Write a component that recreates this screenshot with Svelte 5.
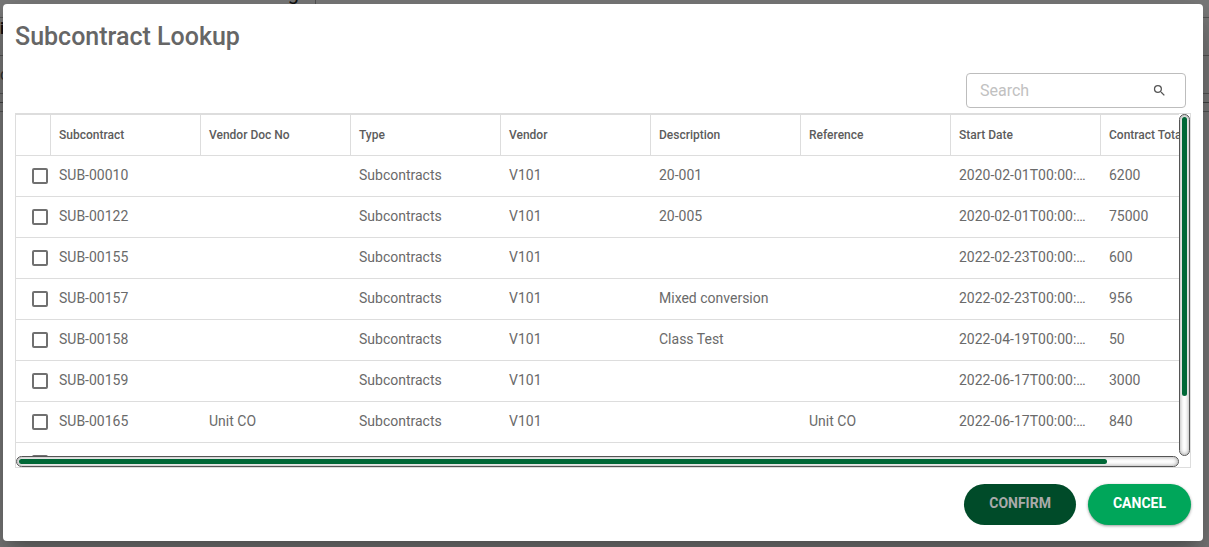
<script>
  const columns = [
    { key: 'id', label: 'Subcontract' },
    { key: 'vendorDocNo', label: 'Vendor Doc No' },
    { key: 'type', label: 'Type' },
    { key: 'vendor', label: 'Vendor' },
    { key: 'description', label: 'Description' },
    { key: 'reference', label: 'Reference' },
    { key: 'startDate', label: 'Start Date' },
    { key: 'total', label: 'Contract Total' }
  ];

  const rows = [
    { id: 'SUB-00010', type: 'Subcontracts', vendor: 'V101', description: '20-001', startDate: '2020-02-01T00:00:00', total: 6200 },
    { id: 'SUB-00122', type: 'Subcontracts', vendor: 'V101', description: '20-005', startDate: '2020-02-01T00:00:00', total: 75000 },
    { id: 'SUB-00155', type: 'Subcontracts', vendor: 'V101', startDate: '2022-02-23T00:00:00', total: 600 },
    { id: 'SUB-00157', type: 'Subcontracts', vendor: 'V101', description: 'Mixed conversion', startDate: '2022-02-23T00:00:00', total: 956 },
    { id: 'SUB-00158', type: 'Subcontracts', vendor: 'V101', description: 'Class Test', startDate: '2022-04-19T00:00:00', total: 50 },
    { id: 'SUB-00159', type: 'Subcontracts', vendor: 'V101', startDate: '2022-06-17T00:00:00', total: 3000 },
    { id: 'SUB-00165', vendorDocNo: 'Unit CO', type: 'Subcontracts', vendor: 'V101', reference: 'Unit CO', startDate: '2022-06-17T00:00:00', total: 840 },
    { id: '' }
  ];

  let search = $state('');
  let selected = $state([]);
</script>

<div class="screen">
  <div class="page" aria-hidden="true">
    <div class="page-head"><span>g</span></div>
    <div class="page-row strong">i</div>
    <div class="page-row">c</div>
    <div class="page-gap"></div>
    <div class="page-line"></div>
  </div>

  <div class="backdrop">
    <div class="dialog" role="dialog" aria-modal="true" aria-labelledby="dialog-title">
      <h2 id="dialog-title">Subcontract Lookup</h2>

      <div class="toolbar">
        <div class="search">
          <input type="text" placeholder="Search" aria-label="Search" bind:value={search} />
          <svg viewBox="0 0 24 24" aria-hidden="true">
            <path d="M15.5 14h-.79l-.28-.27A6.47 6.47 0 0 0 16 9.5 6.5 6.5 0 1 0 9.5 16c1.61 0 3.09-.59 4.23-1.57l.27.28v.79l5 4.99L20.49 19l-4.99-5zm-6 0C7.01 14 5 11.99 5 9.5S7.01 5 9.5 5 14 7.01 14 9.5 11.99 14 9.5 14z" />
          </svg>
        </div>
      </div>

      <div class="grid">
        <div class="viewport">
          <table>
            <colgroup>
              <col class="col-check" />
              {#each columns as column (column.key)}
                <col class="col-data" />
              {/each}
            </colgroup>
            <thead>
              <tr>
                <th></th>
                {#each columns as column (column.key)}
                  <th>{column.label}</th>
                {/each}
              </tr>
            </thead>
            <tbody>
              {#each rows as row (row.id)}
                <tr>
                  <td class="check">
                    <input type="checkbox" value={row.id} bind:group={selected} aria-label="Select {row.id}" />
                  </td>
                  {#each columns as column (column.key)}
                    <td>{row[column.key] ?? ''}</td>
                  {/each}
                </tr>
              {/each}
            </tbody>
          </table>
        </div>
        <div class="track vertical"><div class="thumb"></div></div>
        <div class="track horizontal"><div class="thumb"></div></div>
      </div>

      <div class="actions">
        <button class="confirm" disabled={selected.length === 0}>CONFIRM</button>
        <button class="cancel">CANCEL</button>
      </div>
    </div>
  </div>
</div>

<style>
  :global(body) {
    margin: 0;
    font-family: Roboto, 'Liberation Sans', sans-serif;
  }

  .screen {
    display: grid;
    grid-template-columns: minmax(0, 1fr);
    min-height: 100vh;
    overflow: hidden;
  }

  .page,
  .backdrop {
    grid-area: 1 / 1;
  }

  /* page under the dialog, scrolled down a little */
  .page {
    margin-top: -24px;
    background: #f4f4f4;
    color: #666;
    font-size: 16px;
  }

  .page-head {
    box-sizing: border-box;
    height: 42px;
    border-bottom: 1px solid #aaa;
  }

  .page-head span {
    display: block;
    box-sizing: border-box;
    width: 316px;
    height: 41px;
    padding-right: 16px;
    border-right: 1px solid #aaa;
    color: #222;
    font-size: 20px;
    line-height: 34px;
    text-align: right;
  }

  .page-row {
    box-sizing: border-box;
    height: 38px;
    border-bottom: 1px solid #aaa;
    line-height: 38px;
  }

  .page-row.strong {
    color: #222;
    font-weight: 700;
    line-height: 22px;
  }

  .page-gap {
    height: 8px;
    border-bottom: 1px solid #888;
  }

  .page-line {
    height: 8px;
    border-bottom: 1px solid #aaa;
  }

  .backdrop {
    position: relative;
    box-sizing: border-box;
    padding: 4px 6px 6px 3px;
    background: rgba(0, 0, 0, 0.5);
  }

  .dialog {
    box-sizing: border-box;
    padding: 17px 12px 16px;
    background: #fff;
    border-radius: 4px;
    box-shadow:
      0 11px 15px -7px rgba(0, 0, 0, 0.2),
      0 24px 38px 3px rgba(0, 0, 0, 0.14),
      0 9px 46px 8px rgba(0, 0, 0, 0.12);
    color: #666;
  }

  h2 {
    margin: 0;
    font-size: 25px;
    font-weight: 500;
    line-height: 32px;
  }

  .toolbar {
    display: flex;
    justify-content: flex-end;
    padding: 20px 5px 5px;
  }

  .search {
    display: flex;
    align-items: center;
    box-sizing: border-box;
    width: 220px;
    height: 35px;
    padding: 0 18px 0 13px;
    border: 1px solid #bdbdbd;
    border-radius: 4px;
  }

  .search input {
    flex: 1;
    min-width: 0;
    padding: 0;
    border: 0;
    outline: 0;
    background: none;
    color: #666;
    font: 400 16px Roboto, 'Liberation Sans', sans-serif;
  }

  .search input::placeholder {
    color: #c1c1c1;
  }

  .search svg {
    width: 15px;
    height: 15px;
    fill: #555;
  }

  .grid {
    display: grid;
    grid-template-columns: minmax(0, 1fr) 11px;
    grid-template-rows: 342px 11px;
    border: 1px solid #ddd;
  }

  .viewport {
    overflow: hidden;
    border-top: 1px solid #ddd;
  }

  table {
    width: 1235px;
    table-layout: fixed;
    border-collapse: separate;
    border-spacing: 0;
  }

  .col-check {
    width: 35px;
  }

  .col-data {
    width: 150px;
  }

  th,
  td {
    box-sizing: border-box;
    height: 41px;
    padding: 0 12px 2px 8px;
    border-bottom: 1px solid #ddd;
    overflow: hidden;
    text-align: left;
    text-overflow: ellipsis;
    white-space: nowrap;
  }

  th {
    padding-bottom: 0;
    border-right: 1px solid #ddd;
    color: #5c5c5c;
    font-size: 12px;
    font-weight: 500;
  }

  td {
    color: #6a6a6a;
    font-size: 14px;
  }

  td.check {
    padding: 0 0 0 16px;
  }

  td input {
    display: block;
    appearance: none;
    box-sizing: border-box;
    width: 16px;
    height: 16px;
    margin: 0;
    border: 2px solid #707070;
    border-radius: 2px;
  }

  td input:checked {
    background: #006837;
  }

  .track {
    display: flex;
    box-sizing: border-box;
    padding: 2px;
    border: 1px solid #555;
    border-radius: 6px;
    background: #fff;
    box-shadow: inset 0 0 4px #999;
  }

  .thumb {
    border-radius: 3px;
    background: #006837;
  }

  .vertical .thumb {
    width: 100%;
    height: 83%;
  }

  .horizontal .thumb {
    width: 94%;
  }

  .actions {
    display: flex;
    justify-content: flex-end;
    gap: 12px;
    padding-top: 16px;
  }

  button {
    height: 41px;
    padding: 0 25px 3px;
    border: 0;
    border-radius: 21px;
    font: 700 14px Roboto, 'Liberation Sans', sans-serif;
  }

  .confirm {
    background: #004b29;
    color: #aaa;
  }

  .cancel {
    background: #00a65a;
    box-shadow: 0 1px 3px rgba(0, 0, 0, 0.4);
    color: #fff;
  }
</style>
